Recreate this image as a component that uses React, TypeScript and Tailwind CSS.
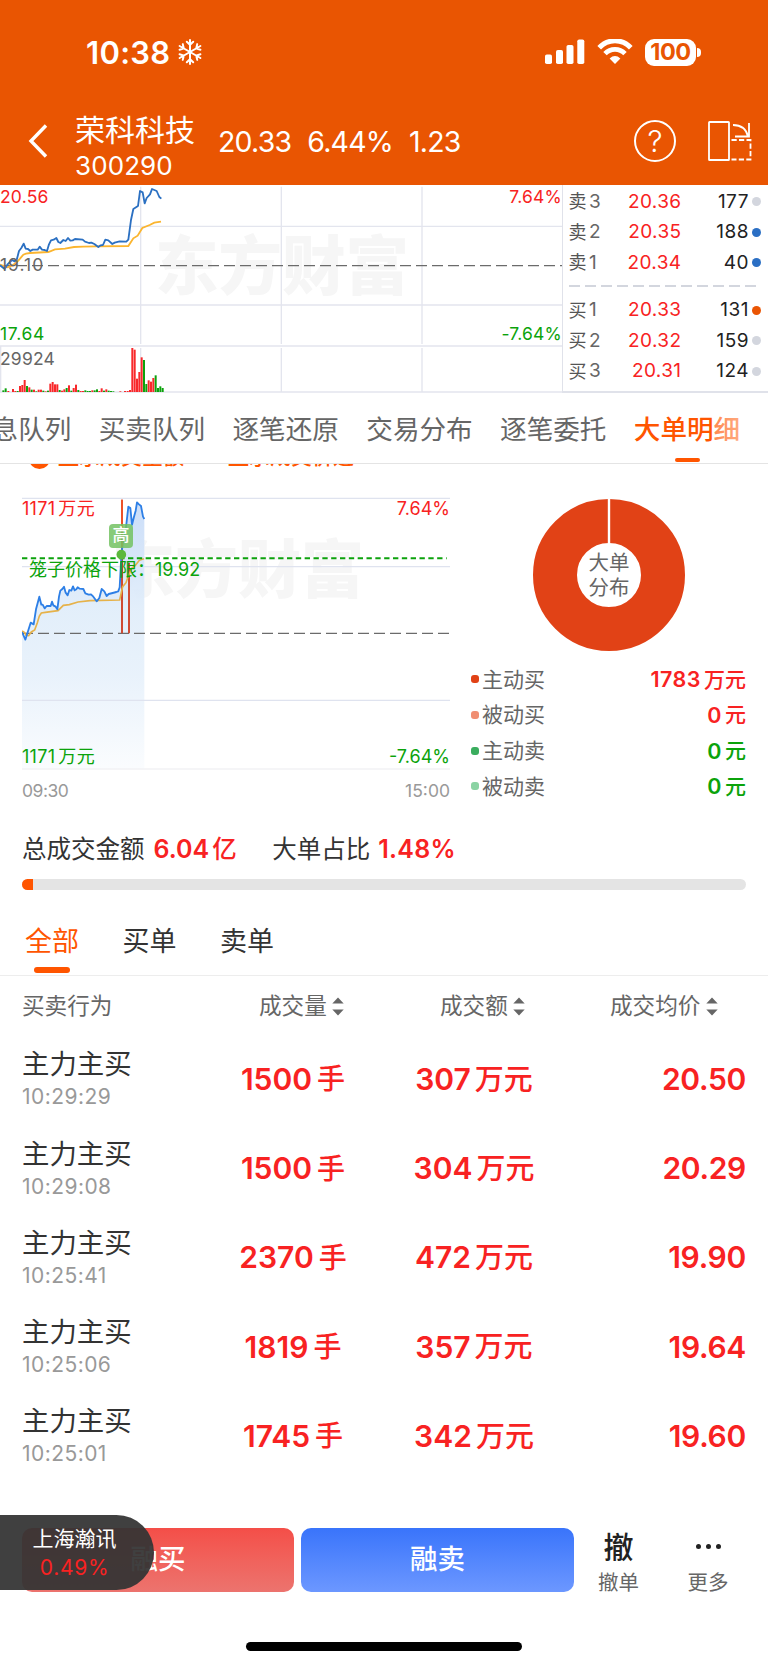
import clsx from "clsx";

type Quote = { label: string; level: number; price: string; volume: number; dot: string };

const asks: Quote[] = [
  { label: "卖", level: 3, price: "20.36", volume: 177, dot: "bg-[#d3d6de]" },
  { label: "卖", level: 2, price: "20.35", volume: 188, dot: "bg-[#2b6fc4]" },
  { label: "卖", level: 1, price: "20.34", volume: 40, dot: "bg-[#2b6fc4]" }
];

const bids: Quote[] = [
  { label: "买", level: 1, price: "20.33", volume: 131, dot: "bg-[#ea5504]" },
  { label: "买", level: 2, price: "20.32", volume: 159, dot: "bg-[#d3d6de]" },
  { label: "买", level: 3, price: "20.31", volume: 124, dot: "bg-[#d3d6de]" }
];

const tabs = ["消息队列", "买卖队列", "逐笔还原", "交易分布", "逐笔委托", "大单明细"];

const legend = [
  { label: "主动买", value: "1783", unit: "万元", dot: "bg-[#e14216]", color: "text-[#f82222]" },
  { label: "被动买", value: "0", unit: "元", dot: "bg-[#f08e72]", color: "text-[#f82222]" },
  { label: "主动卖", value: "0", unit: "元", dot: "bg-[#3aad5e]", color: "text-[#0ba30b]" },
  { label: "被动卖", value: "0", unit: "元", dot: "bg-[#8bd3a3]", color: "text-[#0ba30b]" }
];

const orders = [
  { time: "10:29:29", lots: "1500", amount: "307", price: "20.50" },
  { time: "10:29:08", lots: "1500", amount: "304", price: "20.29" },
  { time: "10:25:41", lots: "2370", amount: "472", price: "19.90" },
  { time: "10:25:06", lots: "1819", amount: "357", price: "19.64" },
  { time: "10:25:01", lots: "1745", amount: "342", price: "19.60" }
];

// [x, height, rising]
const volumes: Array<[number, number, boolean]> = [
  [7, 5, false], [14, 11, false], [22, 3, true], [36, 9, true], [43, 3, true], [50, 3, false], [57, 18, true],
  [64, 21, true], [71, 36, true], [78, 18, false], [85, 14, true], [92, 7, false], [99, 7, true], [106, 2, false],
  [113, 7, true], [120, 7, true], [127, 4, false], [134, 2, true], [141, 4, false], [148, 25, true], [155, 30, true],
  [162, 23, true], [169, 23, true], [176, 6, false], [183, 4, true], [190, 8, true], [197, 12, false], [204, 20, true],
  [211, 4, false], [218, 12, true], [225, 22, true], [232, 6, false], [239, 3, true], [246, 3, true], [253, 5, false],
  [260, 3, false], [267, 3, false], [274, 5, true], [281, 5, false], [288, 8, false], [295, 3, true], [302, 11, true],
  [309, 4, false], [316, 8, true], [323, 4, false], [330, 3, false], [337, 2, false], [358, 2, true], [372, 3, true],
  [380, 3, true], [387, 6, true], [394, 132, true], [401, 127, true], [408, 40, true], [415, 60, true],
  [422, 104, true], [429, 96, false], [436, 24, false], [443, 35, true], [450, 31, true], [457, 42, true],
  [464, 50, false], [471, 12, false], [478, 17, false], [485, 12, false]
];

const minutePrice =
  "0,256 14,267 22,254 36,240 44,244 50,240 57,213 64,204 71,191 77,206 84,207 91,213 98,209 113,209 119,200 126,209 134,210 141,213 147,193 153,181 161,179 169,174 175,186 181,189 190,180 197,183 204,174 211,182 218,181 225,177 248,179 255,185 267,189 274,188 283,192 295,201 302,196 309,195 316,179 325,181 337,192 344,188 359,184 379,185 385,179 393,120 400,87 414,78 420,33 428,37 434,70 440,54 450,43 456,27 470,33 478,51 484,56";

const minuteAverage =
  "0,254 14,259 22,262 36,257 50,247 60,236 70,224 78,221 90,219 145,216 165,208 195,206 222,201 250,200 290,199 385,198 400,175 413,167 427,144 449,135 463,128 483,125";

const bigPrice =
  "66,546 76,569 92,518 101,523 108,478 118,440 124,464 128,464 134,475 140,468 152,468 156,455 160,466 167,470 172,478 177,440 181,422 187,417 192,410 197,428 203,436 208,420 214,422 219,409 224,421 229,418 233,412 239,416 250,417 256,430 266,434 273,433 280,440 290,454 298,444 305,417 313,424 320,438 326,432 338,429 349,426 355,424 359,412 364,320 368,280 378,232 385,170 391,174 396,224 402,200 407,182 411,157 417,163 423,168 429,200 433,207";

const bigAverage =
  "66,543 74,548 78,556 86,557 94,546 104,540 112,518 118,498 124,489 136,487 174,482 190,466 208,464 234,456 270,452 359,450 368,410 378,398 386,375 396,354 406,346 418,331 432,326";

function StatusBar() {
  return (
    <div className="flex h-[104px] items-center justify-between pr-[67px] pl-[86px] text-white">
      <div className="flex items-center gap-[7px]">
        <span className="text-[31px] leading-none font-semibold tracking-[0.3px]">10:38</span>
        <svg className="h-[26px] w-[24px]" viewBox="0 0 24 26" fill="none" stroke="currentColor" strokeWidth="2" strokeLinecap="round">
          {[0, 60, 120, 180, 240, 300].map((angle) => (
            <path key={angle} d="M12 13V1M8.8 2.8l3.2 3l3.2-3" transform={`rotate(${angle} 12 13)`} />
          ))}
        </svg>
      </div>
      <div className="flex items-center">
        <svg className="h-[26px] w-[40px]" viewBox="0 0 40 26" fill="currentColor">
          <rect x="0" y="15.5" width="7" height="9.5" rx="1.8" />
          <rect x="11" y="11" width="7" height="14" rx="1.8" />
          <rect x="21.5" y="6" width="7" height="19" rx="1.8" />
          <rect x="32.3" y="0.5" width="7" height="24.5" rx="1.8" />
        </svg>
        <svg className="ml-[12px] h-[26px] w-[36px]" viewBox="0 0 36 26" fill="none" stroke="currentColor">
          <path d="M2.2 8.8C11-0.6 25-0.6 33.8 8.8" strokeWidth="5" />
          <path d="M8 14.6C13.6 8.9 22.4 8.9 28 14.6" strokeWidth="4.8" />
          <path d="M12.6 19.4Q18 14.6 23.4 19.4L18 25Z" fill="currentColor" stroke="none" />
        </svg>
        <div className="ml-[12px] flex h-[27px] w-[51px] items-center justify-center rounded-[9px] bg-white text-[23.5px] font-bold tracking-[-0.4px] text-[#e95502]">
          100
        </div>
        <div className="ml-[1px] h-[9px] w-[4px] rounded-r-full bg-white" />
      </div>
    </div>
  );
}

function TitleBar() {
  return (
    <div className="flex h-[81px] pl-[28px] text-white">
      <svg className="mt-[20px] h-[34px] w-[20px]" viewBox="0 0 20 34" fill="none" stroke="currentColor" strokeWidth="3.4">
        <path d="M18 1.5L3 17L18 32.5" />
      </svg>
      <div className="ml-[27px] w-[143px]">
        <div className="pt-[8px] text-[30px] leading-[36px]">荣科科技</div>
        <div className="text-[26px] leading-[36px] tracking-[0.1px]">300290</div>
      </div>
      <div className="flex h-[76px] w-[416px] items-center gap-[16px] text-[28.5px] tracking-[-0.8px]">
        <span>20.33</span>
        <span>6.44%</span>
        <span>1.23</span>
      </div>
      <div className="mt-[16px] flex size-[42px] items-center justify-center rounded-full border-2 border-white text-[30px] font-light">?</div>
      <svg className="mt-[16px] ml-[31px] h-[42px] w-[46px]" viewBox="0 0 46 42" fill="none" stroke="currentColor" strokeWidth="1.8">
        <rect x="2" y="2" width="20" height="38" rx="0.6" />
        <path d="M26 5C33 5 39 8 41 16.5M42 3V16.5H28" />
        <path d="M24.5 20H43.5V39.5H24.5" strokeDasharray="5.2 2.3" />
      </svg>
    </div>
  );
}

function MinuteChart() {
  return (
    <div className="relative h-[208px] w-[562px] text-[17.5px] leading-[20px] tracking-[0.2px]">
      <div className="absolute top-[37px] left-[155px] text-[63.5px] leading-[88px] font-black tracking-normal text-[#f6f6f6]">东方财富</div>
      <svg className="absolute inset-0 h-full w-full" viewBox="0 15 1686 624" fill="none">
        <path d="M0 139H1686M0 375H1686M0 498H1686M0 636H1686" stroke="#e3e5ee" strokeWidth="4" />
        <path d="M422 20V492M844 20V492M1266 20V492M422 504V636M844 504V636M1266 504V636M2 498V636" stroke="#e3e5ee" strokeWidth="4" />
        <path d="M0 257H1686" stroke="#6b6b6b" strokeWidth="3.6" strokeDasharray="33 15" />
        <polyline points={minuteAverage} stroke="#fbb52f" strokeWidth="5.5" />
        <polyline points={minutePrice} stroke="#2b70c2" strokeWidth="5.5" strokeLinejoin="round" />
        {volumes.map(([x, height, rising]) => (
          <rect key={x} x={x} y={636 - height} width="6" height={height} fill={rising ? "#f8282a" : "#0ca20c"} />
        ))}
      </svg>
      <span className="absolute top-[2px] left-0 text-[#f82222]">20.56</span>
      <span className="absolute top-[70px] left-0 tracking-[1px] text-[#666]">19.10</span>
      <span className="absolute top-[139px] left-0 tracking-[0.7px] text-[#0ba30b]">17.64</span>
      <span className="absolute top-[164px] left-0 text-[#666]">29924</span>
      <span className="absolute top-[2px] right-0 text-[#f82222]">7.64%</span>
      <span className="absolute top-[139px] right-0 tracking-[0.2px] text-[#0ba30b]">-7.64%</span>
    </div>
  );
}

function QuoteRow({ quote }: { quote: Quote }) {
  return (
    <div className="flex h-[30.5px] items-center text-[19px]">
      <span className="w-[20.5px] text-[18px] text-[#555]">{quote.label}</span>
      <span className="w-[20px] text-[#666]">{quote.level}</span>
      <span className="w-[72.5px] text-right tracking-[0.4px] text-[#f82222]">{quote.price}</span>
      <span className="w-[67.5px] text-right tracking-[0.5px] text-[#222]">{quote.volume}</span>
      <span className={clsx("ml-[2.5px] size-[9px] rounded-full", quote.dot)} />
    </div>
  );
}

function OrderBook() {
  return (
    <div className="h-[208px] w-[206px] border-b-2 border-l border-[#e0e2ea] pl-[5.5px]">
      <div className="pt-[1.5px]">
        {asks.map((quote) => (
          <QuoteRow key={quote.price} quote={quote} />
        ))}
      </div>
      <svg className="mt-[7px] mb-[8px] block h-[2px] w-[190px]" viewBox="0 0 190 2">
        <path d="M0 1H190" stroke="#d3d6de" strokeWidth="2" strokeDasharray="11 5" />
      </svg>
      {bids.map((quote) => (
        <QuoteRow key={quote.price} quote={quote} />
      ))}
    </div>
  );
}

function SectionTabs() {
  return (
    <div className="relative h-[71px] overflow-hidden border-b border-[#e4e4e4]">
      <div className="-ml-[35px] flex gap-[27.4px] pt-[16px]">
        {tabs.map((tab, index) => {
          const active = index === tabs.length - 1;
          return (
            <div key={tab} className={clsx("flex shrink-0 flex-col items-center", active ? "text-[#ff5500]" : "text-[#666]")}>
              <span className={clsx("text-[26.6px] leading-[40px]", active && "font-medium")}>{tab}</span>
              {active ? <span className="mt-[9px] h-[4px] w-[25px] rounded-full bg-[#ff5500]" /> : null}
            </div>
          );
        })}
      </div>
      <div className="absolute top-0 right-0 h-[60px] w-[56px] bg-linear-to-r from-white/30 to-white/70" />
    </div>
  );
}

function BigOrderChart() {
  return (
    <div className="w-[428px] text-[18px]">
      <div className="relative h-[277px]">
        <div className="absolute top-[-6px] left-[90px] text-[63px] leading-[160px] font-black text-[#f6f6f6]">东方财富</div>
        <svg className="absolute inset-0 h-full w-full" viewBox="66 135 1284 831" fill="none">
          <defs>
            <linearGradient id="area" x1="0" y1="0" x2="0" y2="1">
              <stop offset="0" stopColor="#c7dbf8" />
              <stop offset="0.4" stopColor="#e0edfa" />
              <stop offset="0.65" stopColor="#e7f1fb" />
              <stop offset="1" stopColor="#fafcfe" />
            </linearGradient>
          </defs>
          <polygon points={`66,957 ${bigPrice} 433,957`} fill="url(#area)" fillOpacity="0.92" />
          <path d="M66 145H1350M66 350H1350M66 751H1350" stroke="#dfe3ef" strokeWidth="4" />
          <path d="M66 957H1350" stroke="#f2f2f5" strokeWidth="4" />
          <path d="M66 550H1350" stroke="#6b6b6b" strokeWidth="3.6" strokeDasharray="33 15" />
          <path d="M366 149V550M387 338V550" stroke="#cf4a33" strokeWidth="6" />
          <polyline points={bigAverage} stroke="#e6b24a" strokeWidth="5" />
          <polyline points={bigPrice} stroke="#2d7fe6" strokeWidth="5.5" strokeLinejoin="round" />
          <path d="M366 149V290" stroke="#ec5128" strokeWidth="6" />
          <path d="M66 325H1340" stroke="#0ca20c" strokeWidth="6" strokeDasharray="16 10.5" />
          <circle cx="364" cy="314" r="14.5" fill="#5bb83c" />
        </svg>
        <span className="absolute top-[29px] left-[87px] flex h-[24px] w-[24px] items-center justify-center rounded-[4px] bg-[#73c262]/85 text-[17px] font-medium text-white">
          高
        </span>
        <span className="absolute top-[2px] left-0 leading-[24px] tracking-[0.3px] text-[#f82222]">1171<span className="ml-[3px]">万元</span></span>
        <span className="absolute top-[2px] right-0 leading-[24px] text-[#f82222]">7.64%</span>
        <span className="absolute top-[63px] left-[7px] leading-[24px] whitespace-nowrap text-[#0ba30b]">笼子价格下限：19.92</span>
        <span className="absolute top-[250px] left-0 leading-[24px] tracking-[0.3px] text-[#0ba30b]">1171<span className="ml-[3px]">万元</span></span>
        <span className="absolute top-[250px] right-0 leading-[24px] text-[#0ba30b]">-7.64%</span>
      </div>
      <div className="flex justify-between pt-[6px] text-[17.5px] leading-[26px] text-[#999]">
        <span className="tracking-[-0.5px]">09:30</span>
        <span>15:00</span>
      </div>
    </div>
  );
}

function Distribution() {
  return (
    <div className="flex-1 pl-[21px]">
      <div className="relative mt-[3px] ml-[61px] size-[154px]">
        <svg className="h-full w-full" viewBox="0 0 154 154" fill="none">
          <circle cx="77" cy="77" r="54" stroke="#e14216" strokeWidth="44" />
          <path d="M77 0V46" stroke="#fff" strokeWidth="2.4" />
        </svg>
        <div className="absolute inset-0 flex items-center justify-center text-center text-[20.5px] leading-[25px] text-[#666]">
          大单
          <br />
          分布
        </div>
      </div>
      <div className="mt-[9.5px]">
        {legend.map((item) => (
          <div key={item.label} className="flex h-[35.7px] items-center">
            <span className={clsx("size-[8px] rounded-[3px]", item.dot)} />
            <span className="ml-[3px] text-[21px] text-[#666]">{item.label}</span>
            <span className={clsx("ml-auto flex items-center gap-[3px] text-[21.5px] font-semibold tracking-[0.5px]", item.color)}>
              {item.value}
              <span className="text-[21px] font-medium tracking-normal">{item.unit}</span>
            </span>
          </div>
        ))}
      </div>
    </div>
  );
}

function Summary() {
  return (
    <div className="px-[22px]">
      <div className="flex h-[36px] items-center text-[24.5px] text-[#333]">
        <span>总成交金额</span>
        <span className="ml-[9px] text-[25px] font-semibold text-[#f82222]">6.04</span>
        <span className="ml-[3px] font-medium text-[#f82222]">亿</span>
        <span className="ml-[35.5px]">大单占比</span>
        <span className="ml-[8px] text-[25px] font-semibold tracking-[0.3px] text-[#f82222]">1.48%</span>
      </div>
      <div className="mt-[12px] h-[11px] overflow-hidden rounded-full bg-[#e4e4e4]">
        <div className="h-full w-[11px] bg-[#ff5500]" />
      </div>
    </div>
  );
}

function SortIcon() {
  return (
    <svg className="ml-[5.5px] h-[19px] w-[12px]" viewBox="0 0 12 19" fill="#666">
      <path d="M6 0.5L11.7 6.5H0.3Z" />
      <path d="M6 18.5L11.7 12.5H0.3Z" />
    </svg>
  );
}

function OrderTable() {
  return (
    <div>
      <div className="flex h-[86px] gap-[43.5px] border-b border-[#ededed] pt-[32px] pl-[25px] text-[27px] leading-[40px] text-[#333]">
        <div className="flex flex-col items-center text-[#ff5500]">
          全部
          <span className="mt-[5px] h-[6px] w-[36px] rounded-full bg-[#ff5500]" />
        </div>
        <div>买单</div>
        <div>卖单</div>
      </div>
      <div className="flex h-[60px] items-center px-[22px] text-[22.6px] text-[#666]">
        <span className="w-[237px]">买卖行为</span>
        <span className="flex w-[181px] items-center">成交量<SortIcon /></span>
        <span className="flex w-[170px] items-center">成交额<SortIcon /></span>
        <span className="flex items-center">成交均价<SortIcon /></span>
      </div>
      {orders.map((order) => (
        <div key={order.time} className="flex h-[89.25px] pl-[22px] text-[30px] font-semibold text-[#f82222]">
          <div className="w-[180px] pt-[9px] font-normal">
            <div className="text-[27.4px] leading-[38px] text-[#333]">主力主买</div>
            <div className="text-[21px] leading-[28px] tracking-[0.45px] text-[#999]">{order.time}</div>
          </div>
          <div className="flex h-[86px] w-[182px] items-center justify-center gap-[5px]">
            {order.lots}
            <span className="text-[28px] font-medium">手</span>
          </div>
          <div className="flex h-[86px] w-[180px] items-center justify-center gap-[4px]">
            {order.amount}
            <span className="text-[29px] font-medium">万元</span>
          </div>
          <div className="flex h-[86px] w-[182px] items-center justify-end tracking-[-0.3px]">{order.price}</div>
        </div>
      ))}
    </div>
  );
}

function ActionBar() {
  return (
    <div className="relative flex h-[64px] pl-[22px]">
      <button className="h-[64px] w-[272px] rounded-[10px] bg-linear-to-b from-[#f44e48] to-[#ec736e] pt-px text-[27.5px] font-medium text-white">
        融买
      </button>
      <button className="ml-[7px] h-[64px] w-[273px] rounded-[10px] bg-linear-to-b from-[#3974fb] to-[#6c97ff] pt-px text-[27.5px] font-medium text-white">
        融卖
      </button>
      <div className="ml-[19px] flex w-[51px] flex-col items-center">
        <span className="text-[30px] leading-[38px] font-medium text-[#222]">撤</span>
        <span className="text-[20.5px] leading-[34px] text-[#666]">撤单</span>
      </div>
      <div className="ml-[38px] flex w-[52px] flex-col items-center">
        <span className="flex h-[38px] shrink-0 items-center gap-[5px]">
          <span className="size-[5px] rounded-full bg-[#222]" />
          <span className="size-[5px] rounded-full bg-[#222]" />
          <span className="size-[5px] rounded-full bg-[#222]" />
        </span>
        <span className="text-[20.5px] leading-[34px] text-[#666]">更多</span>
      </div>
      <div className="absolute top-[-13px] left-0 flex h-[75px] w-[154px] flex-col items-center rounded-r-full bg-[#343434]/94 pt-[9px] pr-[5px] text-[21px] leading-[29px]">
        <span className="text-white">上海瀚讯</span>
        <span className="tracking-[0.7px] text-[#f82222]">0.49%</span>
      </div>
    </div>
  );
}

export default function App() {
  return (
    <main className="flex h-[1665px] w-[768px] flex-col overflow-hidden bg-white font-['Inter','Noto_Sans_CJK_SC',sans-serif]">
      <header className="bg-[#e95502]">
        <StatusBar />
        <TitleBar />
      </header>
      <section className="flex">
        <MinuteChart />
        <OrderBook />
      </section>
      <SectionTabs />
      <div className="flex h-[5px] items-end overflow-hidden pl-[29px] text-[21px] leading-[24px] font-medium whitespace-nowrap text-[#ff5500]">
        <span className="size-[21px] shrink-0 rounded-full bg-[#ff5500]" />
        <span className="ml-[8px] h-[24px]">显示成交金额</span>
        <span className="ml-[44px] h-[24px]">显示成交价速</span>
      </div>
      <section className="mt-[26px] flex pr-[22px] pl-[22px]">
        <BigOrderChart />
        <Distribution />
      </section>
      <div className="mt-[27px]">
        <Summary />
      </div>
      <OrderTable />
      <div className="mt-[45px]">
        <ActionBar />
      </div>
      <div className="mt-[50px] ml-[246px] h-[9px] w-[276px] rounded-full bg-black" />
    </main>
  );
}
